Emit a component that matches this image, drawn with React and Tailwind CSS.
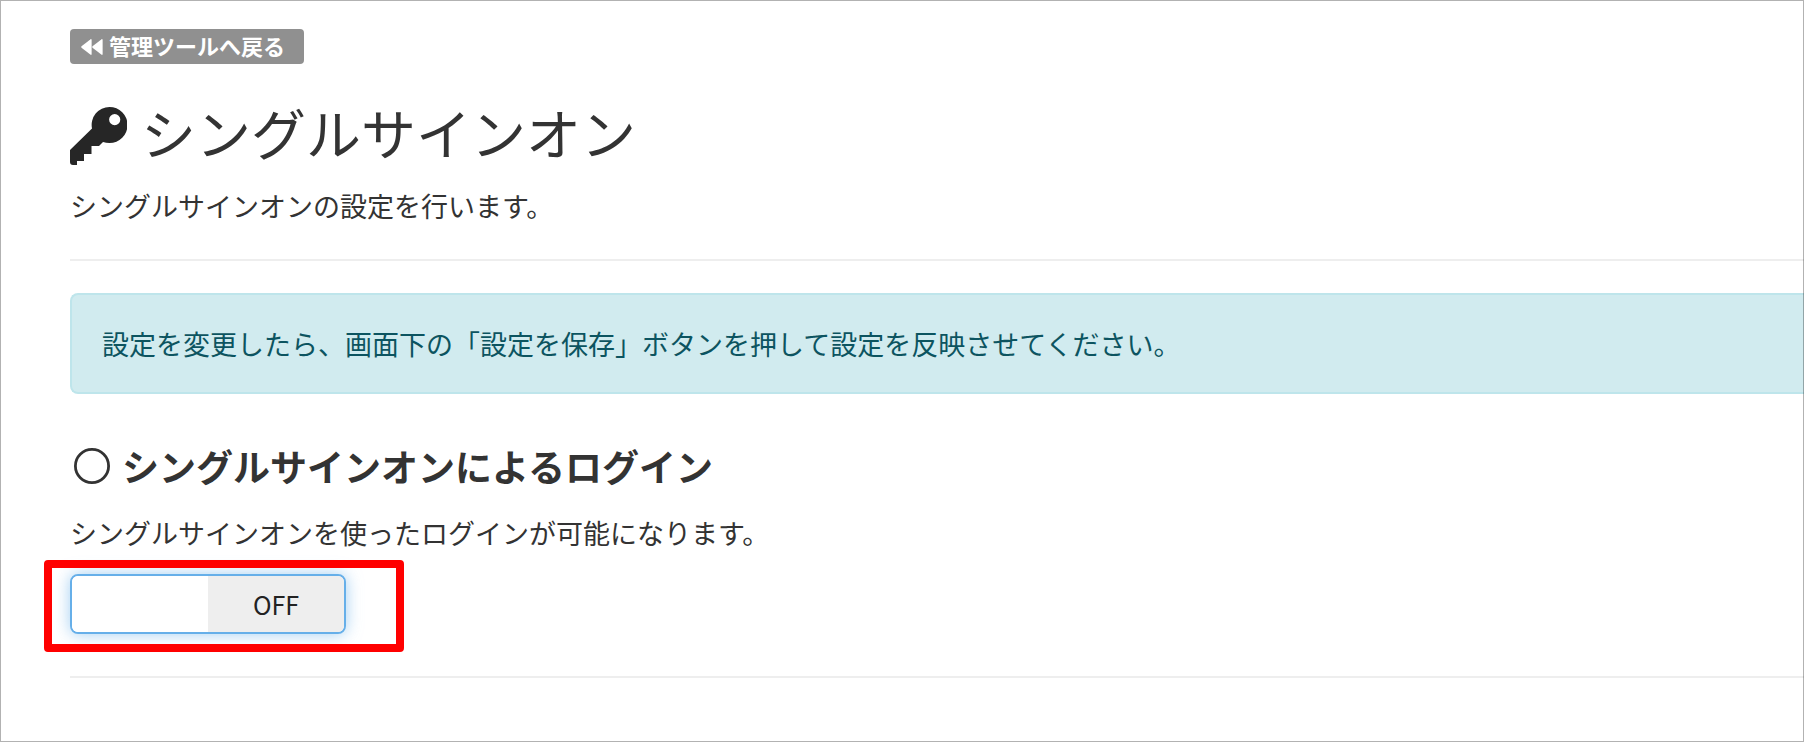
import React, { useState } from 'react';

const RewindIcon = () => (
  <svg viewBox="0 0 22 16" className="w-[22px] h-4 shrink-0" fill="currentColor" aria-hidden="true">
    <path d="M9.3 0.4C10.1 -0.2 10.6 0.2 10.6 1V15C10.6 15.8 10.1 16.2 9.3 15.6L0.5 8.7Q0 8 0.5 7.3Z" />
    <path d="M20.3 0.4C21.1 -0.2 21.6 0.2 21.6 1V15C21.6 15.8 21.1 16.2 20.3 15.6L11.5 8.7Q11 8 11.5 7.3Z" />
  </svg>
);

const KeyIcon = () => (
  <svg viewBox="0 0 57 58" className="w-[57px] h-[58px] shrink-0 text-[#262626]" fill="currentColor" aria-hidden="true">
    <path
      fillRule="evenodd"
      d="M39.5 0A17.9 17.9 0 0 1 39.5 36Q36 36 33 35L29 39H21.5V47H14V54H7V58H3Q0 58 0 55V43L22 21.500A17.9 17.9 0 0 1 39.5 0ZM44.7 7A5.6 5.6 0 1 0 44.7 18.2A5.6 5.6 0 1 0 44.7 7Z"
    />
  </svg>
);

const CircleIcon = () => (
  <svg viewBox="0 0 36 36" className="w-9 h-9 shrink-0" fill="none" stroke="currentColor" aria-hidden="true">
    <circle cx="18" cy="18" r="16.6" strokeWidth="2.8" />
  </svg>
);

const ToggleSwitch = ({ label, checked, onChange }) => (
  <label className="relative flex w-[276px] h-[60px] overflow-hidden rounded-lg border-2 border-[#66afe9] bg-white text-[25px] text-[#222] shadow-[0_0_16px_rgba(102,175,233,0.6)] cursor-pointer">
    <input
      type="checkbox"
      role="switch"
      aria-label={label}
      checked={checked}
      onChange={(e) => onChange(e.target.checked)}
      className="sr-only"
    />
    <span className={`flex flex-1 items-center justify-center ${checked ? 'bg-[#337ab7] text-white' : 'bg-white'}`}>
      {checked ? 'ON' : ''}
    </span>
    <span className={`flex flex-1 items-center justify-center ${checked ? 'bg-white' : 'bg-[#eee]'}`}>
      {checked ? '' : 'OFF'}
    </span>
  </label>
);

const App = () => {
  const [ssoEnabled, setSsoEnabled] = useState(false);

  return (
    <div className="relative min-h-screen bg-white pl-[70px] pt-[29px] pb-16 font-['Noto_Sans_CJK_JP',sans-serif] text-[27px] leading-[40px] text-[#333]">
      <a
        href="#admin"
        className="flex w-fit h-[35px] items-center gap-[6px] rounded bg-[#909090] pl-[11px] pr-[19px] text-[22px] font-bold text-white"
      >
        <RewindIcon />
        <span className="pb-1">管理ツールへ戻る</span>
      </a>

      <header className="border-b-2 border-[#eee] pb-[33px]">
        <h1 className="mt-8 flex h-20 items-center gap-[14px] text-[55px] leading-[80px]">
          <KeyIcon />
          <span className="pb-[10px]">シングルサインオン</span>
        </h1>
        <p className="mt-[10px]">シングルサインオンの設定を行います。</p>
      </header>

      <div role="alert" className="mt-8 rounded-l-lg border-2 border-r-0 border-[#bee5eb] bg-[#d1ebef] px-[30px] pt-[29px] pb-7 text-[#0c5460]">
        設定を変更したら、画面下の「設定を保存」ボタンを押して設定を反映させてください。
      </div>

      <section className="border-b-2 border-[#eee] pb-[42px]">
        <h2 className="mt-[46px] flex items-center gap-3 pl-1 text-[37px] leading-[52px] font-bold">
          <CircleIcon />
          シングルサインオンによるログイン
        </h2>
        <p className="my-[21px]">シングルサインオンを使ったログインが可能になります。</p>
        <div className="relative w-fit">
          <ToggleSwitch label="シングルサインオンによるログイン" checked={ssoEnabled} onChange={setSsoEnabled} />
          {/* highlight around the switch */}
          <div className="pointer-events-none absolute -left-[26px] -right-[58px] -top-[14px] -bottom-[18px] rounded border-8 border-[#f00]" />
        </div>
      </section>

      <div className="pointer-events-none absolute inset-0 border border-black/30" />
    </div>
  );
};

export default App;
